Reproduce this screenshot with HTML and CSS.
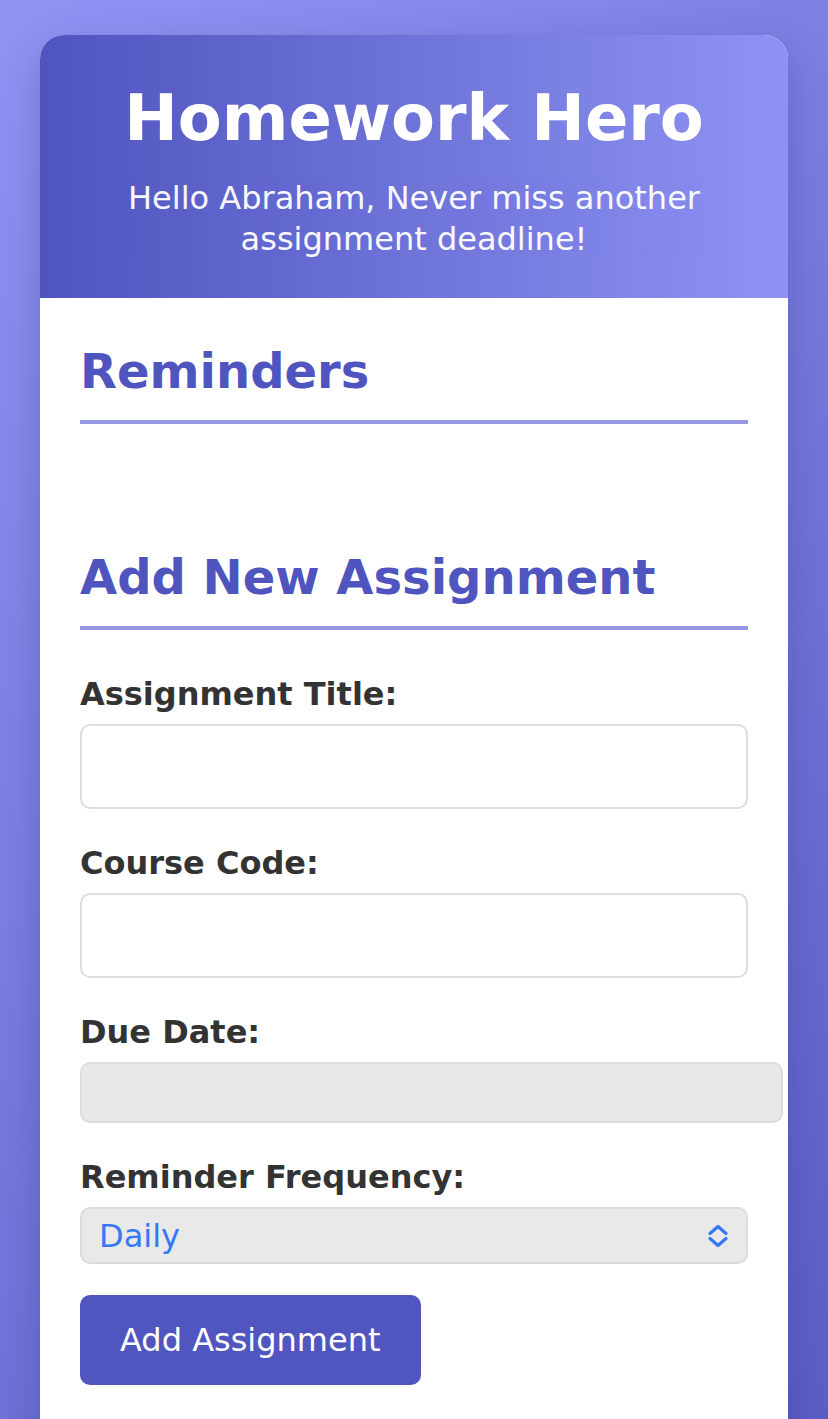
FILE: index.html
```html
<!DOCTYPE html>
<html lang="en">
<head>
<meta charset="utf-8">
<title>Homework Hero</title>
<link rel="stylesheet" href="styles.css">
</head>
<body>
<div class="card">
  <header class="hero">
    <h1 class="hero-title">Homework Hero</h1>
    <p class="hero-sub">Hello Abraham, Never miss another assignment deadline!</p>
  </header>
  <main class="card-body">
    <section class="section reminders">
      <h2 class="section-title">Reminders</h2>
      <div class="reminder-list"></div>
    </section>
    <section class="section">
      <h2 class="section-title">Add New Assignment</h2>
      <form class="form">
        <div class="field">
          <label class="label" for="title">Assignment Title:</label>
          <input class="input" id="title" type="text">
        </div>
        <div class="field">
          <label class="label" for="course">Course Code:</label>
          <input class="input" id="course" type="text">
        </div>
        <div class="field">
          <label class="label" for="due">Due Date:</label>
          <div class="input date-input" id="due"></div>
        </div>
        <div class="field">
          <label class="label" for="freq">Reminder Frequency:</label>
          <div class="select" id="freq">
            <span class="select-value">Daily</span>
            <svg class="select-arrows" width="22" height="24" viewBox="0 0 22 24" aria-hidden="true">
              <path d="M3 9.5 L11 2.5 L19 9.5" fill="none" stroke="#3478f6" stroke-width="3.2" stroke-linecap="round" stroke-linejoin="round"/>
              <path d="M3 14.5 L11 21.5 L19 14.5" fill="none" stroke="#3478f6" stroke-width="3.2" stroke-linecap="round" stroke-linejoin="round"/>
            </svg>
          </div>
        </div>
        <button class="btn" type="button">Add Assignment</button>
      </form>
    </section>
  </main>
</div>
</body>
</html>
```

FILE: styles.css
```css
* { box-sizing: border-box; }

html, body {
  margin: 0;
  padding: 0;
}

body {
  min-height: 1419px;
  height: 1419px;
  overflow: hidden;
  font-family: "DejaVu Sans", Verdana, sans-serif;
  background: linear-gradient(135deg, #9095f4 0%, #5a5ec7 100%);
  padding: 35px 40px 0;
}

.card {
  background: #ffffff;
  border-radius: 24px;
  overflow: hidden;
  box-shadow: 0 16px 40px rgba(30, 30, 90, 0.25);
  min-height: 1500px;
}

.hero {
  background: linear-gradient(90deg, #4f54bf 0%, #8e93f3 100%);
  color: #ffffff;
  text-align: center;
  padding: 46px 40px 38px;
}

.hero-title {
  margin: 0 0 23px;
  font-size: 64px;
  font-weight: bold;
  line-height: normal;
}

.hero-sub {
  margin: 0;
  font-size: 32px;
  line-height: 41px;
  opacity: 0.95;
}

.card-body {
  padding: 45px 40px 40px;
}

.section-title {
  margin: 0;
  font-size: 48px;
  font-weight: bold;
  line-height: normal;
  color: #4f54bf;
  padding-bottom: 21px;
  border-bottom: 4px solid #9598e2;
}

.reminders {
  margin-bottom: 125px;
}

.reminder-list {
  min-height: 0;
}

.form {
  margin-top: 45px;
}

.field {
  display: flex;
  flex-direction: column;
  margin-bottom: 35px;
}

.label {
  font-size: 32px;
  font-weight: bold;
  color: #333333;
  line-height: normal;
  margin-bottom: 11px;
}

.input {
  height: 85px;
  width: 100%;
  border: 2px solid #dddddd;
  border-radius: 10px;
  background: #ffffff;
  font-family: inherit;
  font-size: 32px;
  padding: 0 18px;
}

.date-input {
  width: 703px;
  height: 61px;
  background: #e8e8e8;
}

.select {
  height: 57px;
  width: 100%;
  border: 2px solid #dcdcdc;
  border-radius: 10px;
  background: #e9e9e9;
  display: flex;
  align-items: center;
  justify-content: space-between;
  padding: 0 17px 0 17px;
}

.select-value {
  font-size: 32px;
  color: #3478f6;
  line-height: normal;
}

.select-arrows {
  display: block;
}

.btn {
  display: block;
  margin-top: -4px;
  height: 90px;
  padding: 0 40px;
  border: none;
  border-radius: 10px;
  background: #5055c0;
  color: #ffffff;
  font-family: inherit;
  font-size: 32px;
  line-height: normal;
}
```
